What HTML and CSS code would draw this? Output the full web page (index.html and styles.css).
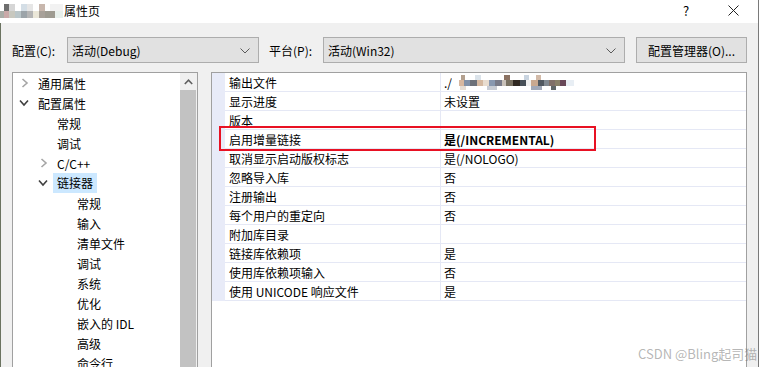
FILE: index.html
```html
<!DOCTYPE html>
<html lang="zh-CN">
<head>
  <meta charset="UTF-8">
  <title>属性页</title>
  <link rel="stylesheet" href="styles.css">
</head>
<body>
  <div class="window">
    <div class="titlebar">
      <div class="title-blur"></div>
      <span class="title">属性页</span>
      <span class="spacer"></span>
      <span class="tb-help">?</span>
      <span class="tb-close">
        <svg width="11" height="11" viewBox="0 0 11 11"><path d="M0.5 0.5 L10.5 10.5 M10.5 0.5 L0.5 10.5" stroke="#222" stroke-width="1" fill="none"/></svg>
      </span>
    </div>

    <div class="content">
      <div class="config-row">
        <span class="lbl">配置(C):</span>
        <div class="combo combo-cfg">
          <span>活动(Debug)</span>
          <svg class="drop" width="10" height="6" viewBox="0 0 10 6"><polyline points="0.5,0.5 5,5 9.5,0.5" stroke="#5a5a5a" fill="none"/></svg>
        </div>
        <span class="lbl lbl-plat">平台(P):</span>
        <div class="combo combo-plat">
          <span>活动(Win32)</span>
          <svg class="drop" width="10" height="6" viewBox="0 0 10 6"><polyline points="0.5,0.5 5,5 9.5,0.5" stroke="#5a5a5a" fill="none"/></svg>
        </div>
        <button class="btn">配置管理器(O)...</button>
      </div>

      <div class="panels">
        <div class="tree">
          <ul class="tree-list">
            <li class="lv0"><svg class="chev" width="8" height="10" viewBox="0 0 8 10"><polyline points="1.5,1 6,5 1.5,9" stroke="#a6a6a6" stroke-width="1.6" fill="none"/></svg>通用属性</li>
            <li class="lv0"><svg class="chev" width="10" height="8" viewBox="0 0 10 8"><polyline points="1,1.5 5,6 9,1.5" stroke="#404040" stroke-width="1.6" fill="none"/></svg>配置属性</li>
            <li class="lv1">常规</li>
            <li class="lv1">调试</li>
            <li class="lv1"><svg class="chev" width="8" height="10" viewBox="0 0 8 10"><polyline points="1.5,1 6,5 1.5,9" stroke="#a6a6a6" stroke-width="1.6" fill="none"/></svg>C/C++</li>
            <li class="lv1"><svg class="chev" width="10" height="8" viewBox="0 0 10 8"><polyline points="1,1.5 5,6 9,1.5" stroke="#404040" stroke-width="1.6" fill="none"/></svg><span class="sel">链接器</span></li>
            <li class="lv2">常规</li>
            <li class="lv2">输入</li>
            <li class="lv2">清单文件</li>
            <li class="lv2">调试</li>
            <li class="lv2">系统</li>
            <li class="lv2">优化</li>
            <li class="lv2">嵌入的 IDL</li>
            <li class="lv2">高级</li>
            <li class="lv2">命令行</li>
          </ul>
          <div class="vscroll">
            <div class="vs-up">
              <svg width="9" height="6" viewBox="0 0 9 6"><polyline points="0.8,5 4.5,1.2 8.2,5" stroke="#606060" stroke-width="1.6" fill="none"/></svg>
            </div>
            <div class="vs-thumb"></div>
          </div>
        </div>

        <div class="grid">
          <div class="row"><span class="gut"></span><span class="name">输出文件</span><span class="val">./<i class="val-blur"></i></span></div>
          <div class="row"><span class="gut"></span><span class="name">显示进度</span><span class="val">未设置</span></div>
          <div class="row"><span class="gut"></span><span class="name">版本</span><span class="val"></span></div>
          <div class="row"><span class="gut"></span><span class="name">启用增量链接</span><span class="val bold">是(/INCREMENTAL)</span></div>
          <div class="row"><span class="gut"></span><span class="name">取消显示启动版权标志</span><span class="val">是(/NOLOGO)</span></div>
          <div class="row"><span class="gut"></span><span class="name">忽略导入库</span><span class="val">否</span></div>
          <div class="row"><span class="gut"></span><span class="name">注册输出</span><span class="val">否</span></div>
          <div class="row"><span class="gut"></span><span class="name">每个用户的重定向</span><span class="val">否</span></div>
          <div class="row"><span class="gut"></span><span class="name">附加库目录</span><span class="val"></span></div>
          <div class="row"><span class="gut"></span><span class="name">链接库依赖项</span><span class="val">是</span></div>
          <div class="row"><span class="gut"></span><span class="name">使用库依赖项输入</span><span class="val">否</span></div>
          <div class="row"><span class="gut"></span><span class="name">使用 UNICODE 响应文件</span><span class="val">是</span></div>
          <div class="mark"></div>
        </div>
      </div>
    </div>
  </div>
  <div class="watermark">CSDN @Bling起司猫</div>
</body>
</html>
```

FILE: styles.css
```css
body { margin: 0; width: 774px; height: 367px; overflow: hidden; background: #fff; position: relative;
  font-family: "Noto Sans CJK SC", "Microsoft YaHei UI", sans-serif; font-size: 12px; color: #000; }
.window { width: 758px; height: 367px; border-right: 1px solid #7a7a7a; display: flex; flex-direction: column; }

.titlebar { height: 23px; background: #fff; display: flex; align-items: center; flex-shrink: 0; }
.title-blur { width: 63px; height: 14px; margin-top: -2px;
  background:
    linear-gradient(90deg, #fff 0 4px, #6e6e6e 4px 9px, #d6d6d6 9px 15px, #fff 15px 21px, #d4dee6 21px 27px, #e6e6e6 27px 33px, #fff 33px 39px, #c8b7ad 39px 45px, #fff 45px 50px, #f2f2f2 50px 63px) top / 100% 7px no-repeat,
    linear-gradient(90deg, #a9ada7 0 4px, #c9a9a8 4px 9px, #c8c8bf 9px 15px, #bac6c9 15px 21px, #9ca4a9 21px 27px, #b5b5b5 27px 33px, #ebe7d8 33px 39px, #a8a199 39px 45px, #9e9b91 45px 55px, #e8f0ec 55px 63px) bottom / 100% 7px no-repeat; }
.title { margin-left: 1px; margin-top: -2px; }
.spacer { flex: 1; }
.tb-help { width: 12px; margin-right: 33px; margin-top: -3px; font-size: 13px; }
.tb-close { width: 11px; height: 11px; margin-right: 19px; margin-top: -3px; display: flex; }

.content { flex: 1; background: #f0f0f0; border-left: 1px solid #6b7360; padding: 14px 0 0 11px; display: flex; flex-direction: column; gap: 9px; }

.config-row { display: flex; align-items: center; height: 26px; }
.lbl { width: 55px; }
.lbl-plat { width: 54px; margin-left: 10px; }
.combo { height: 24px; background: #e1e1e1; border: 1px solid #adadad; display: flex; align-items: center; padding: 0 8px 0 4px; box-sizing: content-box; }
.combo span { flex: 1; }
.combo-cfg { width: 178px; }
.combo-plat { width: 288px; }
.drop { margin-top: 1px; }
.btn { height: 26px; width: 111px; margin-left: 11px; background: #e1e1e1; border: 1px solid #adadad; padding: 0; font: inherit; color: #000; }

.panels { display: flex; gap: 13px; height: 300px; }
.tree { width: 184px; background: #fff; border: 1px solid #a0a0a0; display: flex; }
.tree-list { list-style: none; margin: 0; padding: 0; flex: 1; }
.tree-list li { height: 20px; display: flex; align-items: center; white-space: nowrap; }
.lv0 { padding-left: 25px; }
.lv1 { padding-left: 44px; }
.lv2 { padding-left: 64px; }
.chev { margin-left: -17px; margin-right: 9px; }
.lv0 .chev[width="10"], .lv1 .chev[width="10"] { margin-left: -19px; margin-right: 9px; }
.sel { background: #cce8ff; margin-left: -4px; padding: 0 4px; height: 20px; line-height: 20px; }
.vscroll { width: 17px; background: #f0f0f0; display: flex; flex-direction: column; }
.vs-up { height: 17px; display: flex; align-items: center; justify-content: center; }
.vs-thumb { flex: 1; background: #c2c2c2; margin: 0 1px 0 0; }

.grid { width: 534px; background: #fff; border: 1px solid #a0a0a0; position: relative; }
.row { display: grid; grid-template-columns: 13px 215px 1fr; height: 19px; }
.row span { display: flex; align-items: center; white-space: nowrap; }
.gut { background: #e8ebf8; }
.name { padding-left: 4px; border-bottom: 1px solid #e5e8f5; }
.val { padding-left: 3px; border-left: 1px solid #e5e8f5; border-bottom: 1px solid #e5e8f5; }
.bold { font-weight: bold; }
.val-blur { display: inline-block; width: 122px; height: 15px; margin-left: 0; margin-top: 1px;
  background:
    linear-gradient(90deg, #fff 0 9px, #b3a08e 9px 13px, #fff 13px 23px, #dbe3ea 23px 29px, #fff 29px 52px, #8b7262 52px 58px, #fff 58px 72px, #c9d4e0 72px 77px, #fff 77px 84px, #d2baa8 84px 89px, #fff 89px 122px) top / 100% 5px no-repeat,
    linear-gradient(90deg, #fff 0 7px, #d8b8a0 7px 12px, #8191a8 12px 18px, #6c7078 18px 25px, #d4b8a0 25px 31px, #e8dccf 31px 37px, #8898b0 37px 43px, #787a88 43px 50px, #c8c0b8 50px 54px, #787060 54px 61px, #302820 61px 68px, #485058 68px 74px, #f0f0f0 74px 79px, #c8a890 79px 86px, #505860 86px 92px, #808890 92px 97px, #807068 97px 103px, #888068 103px 108px, #684858 108px 114px, #e8eef4 114px 122px) center / 100% 6px no-repeat,
    linear-gradient(90deg, #fff 0 8px, #e6ddd4 8px 14px, #fff 14px 35px, #c8ccd4 35px 45px, #fff 45px 79px, #a0a8b8 79px 90px, #fff 90px 99px, #606868 99px 104px, #fff 104px 122px) bottom / 100% 4px no-repeat; }
.mark { position: absolute; left: 7px; top: 53px; width: 373px; height: 21px; border: 2px solid #e81123; }

.watermark { position: absolute; left: 638px; top: 344px; font-size: 13px; color: rgba(120, 120, 120, 0.55); white-space: nowrap; font-family: "Noto Sans CJK SC", sans-serif; }
```
